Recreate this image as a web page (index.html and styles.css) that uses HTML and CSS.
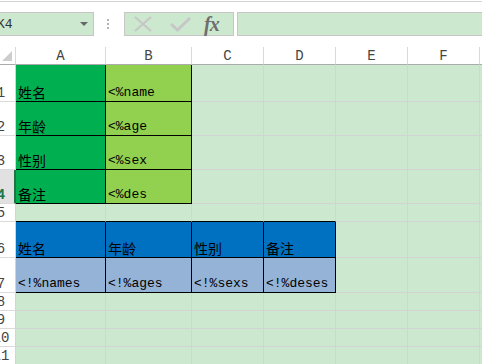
FILE: index.html
```html
<!DOCTYPE html>
<html lang="zh">
<head>
    <meta charset="UTF-8">
    <title>Sheet1</title>
    <link rel="stylesheet" href="styles.css">
</head>
<body>

    <!-- Barra de fórmulas -->
    <div class="toolbar">
        <div class="namebox">
            <span>K4</span>
            <span class="arrow"></span>
        </div>
        <div class="grip"><i></i><i></i><i></i></div>
        <div class="fbuttons">
            <svg class="icon-x" width="20" height="16" viewBox="0 0 20 16">
                <path d="M2 1 L18 15 M18 1 L2 15" stroke="#c6c6c6" stroke-width="2" fill="none"/>
            </svg>
            <svg class="icon-ok" width="21" height="16" viewBox="0 0 21 16">
                <path d="M1 8 L7.5 14 L20 2" stroke="#c6c6c6" stroke-width="2.8" fill="none"/>
            </svg>
            <span class="fx">fx</span>
        </div>
        <div class="formula"></div>
    </div>

    <!-- Hoja -->
    <div class="sheet">
        <div class="corner"><span class="tri"></span></div>
        <div class="ch">A</div>
        <div class="ch">B</div>
        <div class="ch">C</div>
        <div class="ch">D</div>
        <div class="ch">E</div>
        <div class="ch">F</div>
        <div class="ch">G</div>

        <div class="rh"><span>1</span></div>
        <div class="cell dk g1 cjk">姓名</div>
        <div class="cell dk g2">&lt;%name</div>
        <div class="cell"></div><div class="cell"></div><div class="cell"></div><div class="cell"></div><div class="cell"></div>

        <div class="rh"><span>2</span></div>
        <div class="cell dk g1 cjk">年龄</div>
        <div class="cell dk g2">&lt;%age</div>
        <div class="cell"></div><div class="cell"></div><div class="cell"></div><div class="cell"></div><div class="cell"></div>

        <div class="rh"><span>3</span></div>
        <div class="cell dk g1 cjk">性别</div>
        <div class="cell dk g2">&lt;%sex</div>
        <div class="cell"></div><div class="cell"></div><div class="cell"></div><div class="cell"></div><div class="cell"></div>

        <div class="rh selected"><span>4</span></div>
        <div class="cell dk g1 cjk">备注</div>
        <div class="cell dk g2">&lt;%des</div>
        <div class="cell"></div><div class="cell"></div><div class="cell"></div><div class="cell"></div><div class="cell"></div>

        <div class="rh"><span>5</span></div>
        <div class="cell dk-bottom"></div>
        <div class="cell dk-bottom"></div>
        <div class="cell dk-bottom"></div>
        <div class="cell dk-bottom"></div>
        <div class="cell"></div><div class="cell"></div><div class="cell"></div>

        <div class="rh"><span>6</span></div>
        <div class="cell dk b1 cjk">姓名</div>
        <div class="cell dk b1 cjk">年龄</div>
        <div class="cell dk b1 cjk">性别</div>
        <div class="cell dk b1 cjk">备注</div>
        <div class="cell"></div><div class="cell"></div><div class="cell"></div>

        <div class="rh"><span>7</span></div>
        <div class="cell dk b2">&lt;!%names</div>
        <div class="cell dk b2">&lt;!%ages</div>
        <div class="cell dk b2">&lt;!%sexs</div>
        <div class="cell dk b2">&lt;!%deses</div>
        <div class="cell"></div><div class="cell"></div><div class="cell"></div>

        <div class="rh"><span>8</span></div>
        <div class="cell"></div><div class="cell"></div><div class="cell"></div><div class="cell"></div><div class="cell"></div><div class="cell"></div><div class="cell"></div>

        <div class="rh"><span>9</span></div>
        <div class="cell"></div><div class="cell"></div><div class="cell"></div><div class="cell"></div><div class="cell"></div><div class="cell"></div><div class="cell"></div>

        <div class="rh"><span>10</span></div>
        <div class="cell"></div><div class="cell"></div><div class="cell"></div><div class="cell"></div><div class="cell"></div><div class="cell"></div><div class="cell"></div>

        <div class="rh"><span>11</span></div>
        <div class="cell"></div><div class="cell"></div><div class="cell"></div><div class="cell"></div><div class="cell"></div><div class="cell"></div><div class="cell"></div>
    </div>

</body>
</html>
```

FILE: styles.css
```css
body {
    margin: 0;
    padding: 0;
    width: 482px;
    height: 364px;
    overflow: hidden;
    background-color: #fff;
    font-family: "Liberation Mono", "Noto Sans CJK SC", monospace;
    font-size: 13px;
    color: #000;
}
/* Barra de fórmulas */
.toolbar {
    display: flex;
    align-items: flex-start;
    height: 46px;
    box-sizing: border-box;
    margin-top: 1px;
    border-top: 1px solid #d4d4d4;
    padding-top: 10px;
}
.namebox {
    display: flex;
    align-items: center;
    width: 114px;
    height: 24px;
    box-sizing: border-box;
    margin-left: -20px;
    padding-left: 16px;
    background-color: #cce8cf;
    border: 1px solid #c6c6c6;
    color: #333;
    flex-shrink: 0;
}
.namebox .arrow {
    margin-left: auto;
    margin-right: 5px;
    width: 0;
    height: 0;
    border-left: 4px solid transparent;
    border-right: 4px solid transparent;
    border-top: 4px solid #666;
}
.grip {
    display: flex;
    flex-direction: column;
    gap: 2px;
    margin: 7px 15px 0 13px;
}
.grip i {
    display: block;
    width: 2px;
    height: 2px;
    background-color: #b4b4b4;
}
.fbuttons {
    display: flex;
    align-items: center;
    width: 110px;
    height: 24px;
    box-sizing: border-box;
    background-color: #cce8cf;
    border: 1px solid #c6c6c6;
    flex-shrink: 0;
}
.icon-x {
    margin-left: 8px;
}
.icon-ok {
    margin-left: 17px;
}
.fx {
    margin-left: 13px;
    font-family: "Liberation Serif", serif;
    font-style: italic;
    font-weight: bold;
    font-size: 20px;
    color: #6e6e6e;
    letter-spacing: -1px;
}
.formula {
    flex: 1;
    height: 24px;
    box-sizing: border-box;
    margin-left: 3px;
    margin-right: -2px;
    background-color: #cce8cf;
    border: 1px solid #c6c6c6;
}
/* Hoja */
.sheet {
    display: grid;
    grid-template-columns: 16px 90px 86px 72px 72px 72px 72px 72px;
    grid-template-rows: 18px 37px 34px 34px 34px 18px 36px 35px 18px 18px 18px 18px;
    background-color: #cce8cf;
}
.sheet > div {
    box-sizing: border-box;
    overflow: hidden;
    white-space: nowrap;
}
.corner {
    display: flex;
    align-items: flex-end;
    justify-content: flex-end;
    padding: 0 3px 3px 0;
    background-color: #fff;
    border-right: 1px solid #d9d9d9;
    border-bottom: 1px solid #ababab;
}
.corner .tri {
    width: 0;
    height: 0;
    border-left: 10px solid transparent;
    border-bottom: 10px solid #cdcdcd;
}
.ch {
    display: flex;
    align-items: flex-end;
    justify-content: center;
    padding-bottom: 1px;
    background-color: #fff;
    border-right: 1px solid #d9d9d9;
    border-bottom: 1px solid #ababab;
    color: #444;
    font-size: 14px;
    line-height: 14px;
}
.rh {
    display: flex;
    align-items: flex-end;
    padding-bottom: 1px;
    background-color: #fff;
    border-right: 1px solid #d4d4d4;
    border-bottom: 1px solid #dadada;
    color: #444;
    font-size: 14px;
    line-height: 14px;
}
.rh span {
    display: block;
    flex-shrink: 0;
    width: 28px;
    margin-left: -13px;
    text-align: center;
}
.rh.selected {
    background-color: #e1e1e1;
    border-right: 2px solid #217346;
    color: #217346;
    font-weight: bold;
}
.cell {
    display: flex;
    align-items: flex-end;
    padding: 0 0 1px 2px;
    border-right: 1px solid #d4d4d4;
    border-bottom: 1px solid #d4d4d4;
    line-height: 14px;
}
.cell.cjk {
    font-family: "Noto Sans CJK SC", sans-serif;
    font-size: 14px;
    line-height: 16px;
}
.cell.dk {
    border-right-color: #000;
    border-bottom-color: #000;
}
.cell.dk-bottom {
    border-bottom-color: #000;
}
.g1 { background-color: #00b050; }
.g2 { background-color: #92d050; }
.b1 { background-color: #0070c0; }
.b2 { background-color: #95b3d7; }
```
